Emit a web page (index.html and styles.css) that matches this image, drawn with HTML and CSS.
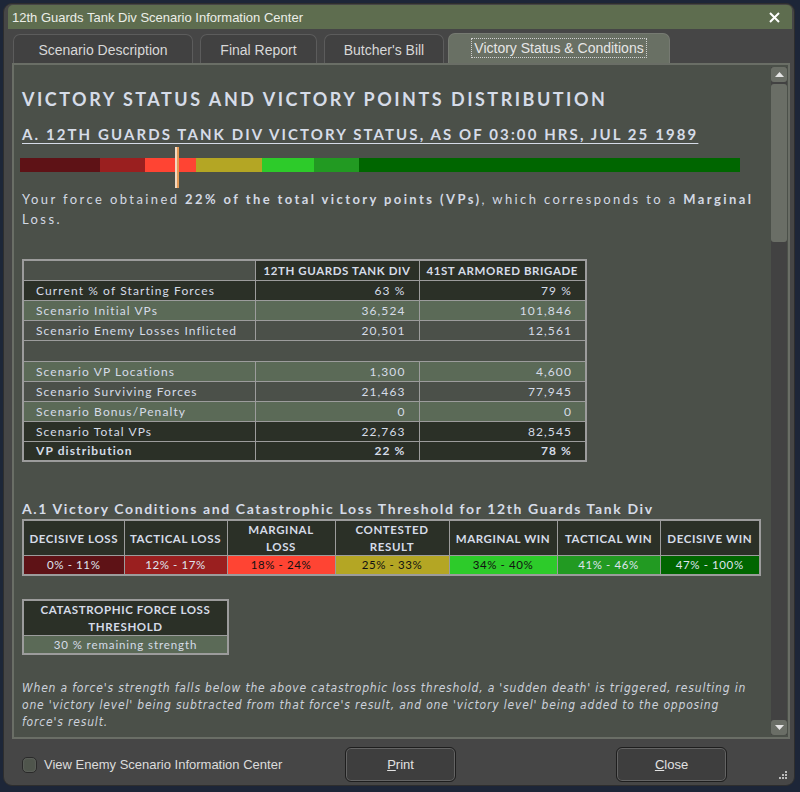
FILE: index.html
```html
<!DOCTYPE html>
<html lang="en">
<head>
    <meta charset="UTF-8">
    <title>12th Guards Tank Div Scenario Information Center</title>
    <link rel="stylesheet" href="styles.css">
</head>
<body>
    <div class="window">
        <div class="titlebar">
            <span>12th Guards Tank Div Scenario Information Center</span>
            <svg class="close-x" width="11" height="11" viewBox="0 0 11 11"><path d="M1 1 L10 10 M10 1 L1 10" stroke="#fff" stroke-width="2"/></svg>
        </div>

        <div class="tabs">
            <div class="tab t1">Scenario Description</div>
            <div class="tab t2">Final Report</div>
            <div class="tab t3">Butcher's Bill</div>
            <div class="tab active"><span class="focus">Victory Status &amp; Conditions</span></div>
        </div>

        <div class="panel">
            <div class="content">
                <h1>VICTORY STATUS AND VICTORY POINTS DISTRIBUTION</h1>
                <h2>A. 12TH GUARDS TANK DIV VICTORY STATUS, AS OF 03:00 HRS, JUL 25 1989</h2>

                <div class="bar-wrap">
                    <div class="bar">
                        <div class="seg c1" style="width: 80px"></div>
                        <div class="seg c2" style="width: 45px"></div>
                        <div class="seg c3" style="width: 51px"></div>
                        <div class="seg c4" style="width: 66px"></div>
                        <div class="seg c5" style="width: 52px"></div>
                        <div class="seg c6" style="width: 45px"></div>
                        <div class="seg c7" style="width: 381px"></div>
                    </div>
                    <div class="marker" style="left: 155px"></div>
                </div>

                <p class="summary">Your force obtained <b>22% of the total victory points (VPs)</b>, which corresponds to a <b>Marginal</b> Loss.</p>

                <table class="vp-table">
                    <tr class="head">
                        <th class="blank"></th>
                        <th>12TH GUARDS TANK DIV</th>
                        <th>41ST ARMORED BRIGADE</th>
                    </tr>
                    <tr class="dark"><td>Current % of Starting Forces</td><td class="num">63 %</td><td class="num">79 %</td></tr>
                    <tr class="green"><td>Scenario Initial VPs</td><td class="num">36,524</td><td class="num">101,846</td></tr>
                    <tr class="plain"><td>Scenario Enemy Losses Inflicted</td><td class="num">20,501</td><td class="num">12,561</td></tr>
                    <tr class="plain gap"><td colspan="3"></td></tr>
                    <tr class="green"><td>Scenario VP Locations</td><td class="num">1,300</td><td class="num">4,600</td></tr>
                    <tr class="plain"><td>Scenario Surviving Forces</td><td class="num">21,463</td><td class="num">77,945</td></tr>
                    <tr class="green"><td>Scenario Bonus/Penalty</td><td class="num">0</td><td class="num">0</td></tr>
                    <tr class="dark"><td>Scenario Total VPs</td><td class="num">22,763</td><td class="num">82,545</td></tr>
                    <tr class="dark bold"><td>VP distribution</td><td class="num">22 %</td><td class="num">78 %</td></tr>
                </table>

                <h3>A.1 Victory Conditions and Catastrophic Loss Threshold for 12th Guards Tank Div</h3>

                <table class="cond-table">
                    <tr>
                        <th class="w1">DECISIVE LOSS</th>
                        <th class="w2">TACTICAL LOSS</th>
                        <th class="w3">MARGINAL<br>LOSS</th>
                        <th class="w4">CONTESTED<br>RESULT</th>
                        <th class="w5">MARGINAL WIN</th>
                        <th class="w6">TACTICAL WIN</th>
                        <th class="w7">DECISIVE WIN</th>
                    </tr>
                    <tr>
                        <td class="c1 light">0% - 11%</td>
                        <td class="c2 light">12% - 17%</td>
                        <td class="c3">18% - 24%</td>
                        <td class="c4">25% - 33%</td>
                        <td class="c5">34% - 40%</td>
                        <td class="c6 light">41% - 46%</td>
                        <td class="c7 light">47% - 100%</td>
                    </tr>
                </table>

                <table class="cat-table">
                    <tr><th>CATASTROPHIC FORCE LOSS<br>THRESHOLD</th></tr>
                    <tr><td>30 % remaining strength</td></tr>
                </table>

                <p class="note">When a force's strength falls below the above catastrophic loss threshold, a 'sudden death' is triggered, resulting in one 'victory level' being subtracted from that force's result, and one 'victory level' being added to the opposing force's result.</p>
            </div>

            <div class="scrollbar">
                <div class="arrow"><svg width="9" height="5" viewBox="0 0 9 5"><path d="M0 5 L4.5 0 L9 5 Z" fill="#e6e6e6"/></svg></div>
                <div class="thumb"></div>
                <div class="track"></div>
                <div class="arrow"><svg width="9" height="5" viewBox="0 0 9 5"><path d="M0 0 L4.5 5 L9 0 Z" fill="#e6e6e6"/></svg></div>
            </div>
        </div>

        <div class="footer">
            <label class="check"><span class="box"></span>View Enemy Scenario Information Center</label>
            <button class="btn print"><u>P</u>rint</button>
            <button class="btn close"><u>C</u>lose</button>
            <svg class="grip" width="8" height="8" viewBox="0 0 8 8">
                <rect x="6" y="0" width="2" height="2" fill="#bbb"/>
                <rect x="3" y="3" width="2" height="2" fill="#bbb"/>
                <rect x="6" y="3" width="2" height="2" fill="#bbb"/>
                <rect x="0" y="6" width="2" height="2" fill="#bbb"/>
                <rect x="3" y="6" width="2" height="2" fill="#bbb"/>
                <rect x="6" y="6" width="2" height="2" fill="#bbb"/>
            </svg>
        </div>
    </div>
</body>
</html>
```

FILE: styles.css
```css
* {
    box-sizing: border-box;
    margin: 0;
    padding: 0;
}

body {
    width: 800px;
    height: 792px;
    overflow: hidden;
    background-color: #1d2638;
    padding: 3px 5px 0 3px;
    font-family: "Liberation Sans", Arial, sans-serif;
}

.window {
    width: 792px;
    height: 783px;
    background-color: #464646;
    border: 1px solid #2e2e2e;
    border-radius: 9px;
    padding: 1px 2px 0 4px;
    display: flex;
    flex-direction: column;
}

.titlebar {
    height: 24px;
    background-color: #5e6d4f;
    border-radius: 5px 5px 0 0;
    color: #eceee8;
    font-size: 13px;
    display: flex;
    align-items: center;
    justify-content: space-between;
    padding: 0 12px 0 4px;
}

/* tabs */
.tabs {
    display: flex;
    align-items: flex-end;
    height: 34px;
    padding-left: 5px;
}

.tab {
    height: 29px;
    margin-right: 7px;
    background-color: #414141;
    border: 1px solid #5c5c5c;
    border-bottom: none;
    border-radius: 7px 7px 0 0;
    color: #d8d8d8;
    font-size: 14px;
    display: flex;
    align-items: center;
    justify-content: center;
    padding-top: 1px;
}

.t1 { width: 180px; }
.t2 { width: 117px; }
.t3 { width: 120px; margin-right: 4px; }

.tab.active {
    width: 222px;
    height: 30px;
    background-color: #697064;
    border-color: #767a72;
    margin-right: 0;
    align-items: flex-start;
    padding-top: 4px;
}

.focus {
    border: 1px dotted #d0d0d0;
    padding: 1px 2px;
    color: #e6e6e6;
}

/* panel */
.panel {
    margin: 0 2px 0 4px;
    height: 676px;
    border: 2px solid #6a6e66;
    background-color: #4b5049;
    display: flex;
}

.content {
    flex: 1;
    overflow: hidden;
    padding: 23px 0 0 8px;
    font-family: Lato, "Open Sans", sans-serif;
    color: #d6dce8;
}

h1 {
    font-size: 18px;
    line-height: 22px;
    letter-spacing: 2.5px;
    font-weight: bold;
}

h2 {
    margin-top: 14px;
    font-size: 15px;
    line-height: 20px;
    letter-spacing: 2.1px;
    font-weight: bold;
    text-decoration: underline;
    text-underline-offset: 3px;
}

.bar-wrap {
    position: relative;
    margin: 2px 0 0 -2px;
    width: 720px;
    height: 42px;
    padding-top: 12px;
}

.bar {
    display: flex;
    height: 14px;
}

.marker {
    position: absolute;
    top: 1px;
    width: 4px;
    height: 41px;
    border-left: 2px solid #f4d8c0;
    border-right: 2px solid #e59a55;
}

.c1 { background-color: #5e1216; }
.c2 { background-color: #9a1f1f; }
.c3 { background-color: #ff4433; }
.c4 { background-color: #b4a624; }
.c5 { background-color: #2dcb2a; }
.c6 { background-color: #229a22; }
.c7 { background-color: #006600; }

.summary {
    margin-top: 1px;
    width: 745px;
    font-size: 13px;
    line-height: 20px;
    letter-spacing: 2.4px;
    color: #d3d9e4;
}

/* victory points table */
table {
    border-collapse: collapse;
    font-size: 12px;
    letter-spacing: 0.6px;
    color: #d6dce8;
}

.vp-table {
    margin-top: 30px;
    width: 565px;
    border: 2px solid #9c9c9c;
}

.vp-table th,
.vp-table td {
    border: 1px solid #9c9c9c;
    height: 20px;
    padding: 0 10px 0 12px;
    letter-spacing: 1.1px;
}

.vp-table th {
    background-color: #2b3027;
    font-size: 11.5px;
    padding: 0 4px;
    letter-spacing: 0.6px;
    text-align: center;
}

.vp-table th.blank {
    width: 232px;
    background-color: #4b5049;
}

.vp-table td.num {
    text-align: right;
    padding-right: 13px;
}

.vp-table tr:nth-child(1) th:nth-child(2) {
    width: 164px;
}

.vp-table .dark td { background-color: #2b3027; }
.vp-table .green td { background-color: #5b6a57; }
.vp-table .plain td { background-color: #4b5049; }
.vp-table .gap td { height: 21px; }
.vp-table .bold td { font-weight: bold; }

h3 {
    margin-top: 38px;
    font-size: 14px;
    line-height: 18px;
    letter-spacing: 1.62px;
    font-weight: bold;
}

/* victory conditions table */
.cond-table {
    margin-top: 1px;
    border: 2px solid #9c9c9c;
    width: 739px;
}

.cond-table th,
.cond-table td {
    border: 1px solid #9c9c9c;
    text-align: center;
    font-size: 11.5px;
}

.cond-table th {
    background-color: #2b3027;
    height: 35px;
    line-height: 17px;
}

.cond-table td {
    height: 19px;
    color: #111;
}

.cond-table td.light { color: #dfe4ee; }

.w1 { width: 101px; }
.w2 { width: 103px; }
.w3 { width: 108px; }
.w4 { width: 114px; }
.w5 { width: 108px; }
.w6 { width: 103px; }

/* catastrophic threshold */
.cat-table {
    margin-top: 23px;
    width: 207px;
    border: 2px solid #9c9c9c;
}

.cat-table th,
.cat-table td {
    border: 1px solid #9c9c9c;
    text-align: center;
    font-size: 11.5px;
}

.cat-table th {
    background-color: #2b3027;
    height: 34px;
    line-height: 17px;
}

.cat-table td {
    background-color: #5b6a57;
    height: 19px;
    letter-spacing: 0.9px;
}

.note {
    margin-top: 25px;
    width: 740px;
    font-style: italic;
    font-family: "DejaVu Sans Condensed", "Liberation Sans Narrow", sans-serif;
    font-size: 12px;
    line-height: 17px;
    letter-spacing: 0.82px;
    color: #cdd2dc;
}

/* scrollbar */
.scrollbar {
    width: 16px;
    margin: 2px 1px 2px 0;
    background-color: #424242;
    display: flex;
    flex-direction: column;
    gap: 2px;
}

.arrow {
    height: 15px;
    background-color: #6a6e66;
    border-radius: 3px;
    display: flex;
    align-items: center;
    justify-content: center;
}

.thumb {
    height: 158px;
    background-color: #6a6e66;
    border-radius: 3px;
}

.track {
    flex: 1;
}

/* footer */
.footer {
    position: relative;
    flex: 1;
    display: flex;
    align-items: center;
    padding: 5px 0 0 14px;
}

.check {
    display: flex;
    align-items: center;
    gap: 7px;
    color: #dcdcdc;
    font-size: 13px;
    width: 323px;
}

.box {
    width: 15px;
    height: 16px;
    border-radius: 5px;
    border: 1px solid #2a2a2a;
    background-color: #4f554c;
    box-shadow: inset 0 0 2px #777;
}

.btn {
    width: 111px;
    height: 35px;
    background-color: #3e3e3e;
    border: 1px solid #1e1e1e;
    border-radius: 6px;
    box-shadow: inset 0 0 0 1px #646464;
    color: #e2e2e2;
    font-family: "Liberation Sans", Arial, sans-serif;
    font-size: 13px;
}

.print {
    margin-right: 160px;
}

.grip {
    position: absolute;
    right: 5px;
    bottom: 6px;
}
```
